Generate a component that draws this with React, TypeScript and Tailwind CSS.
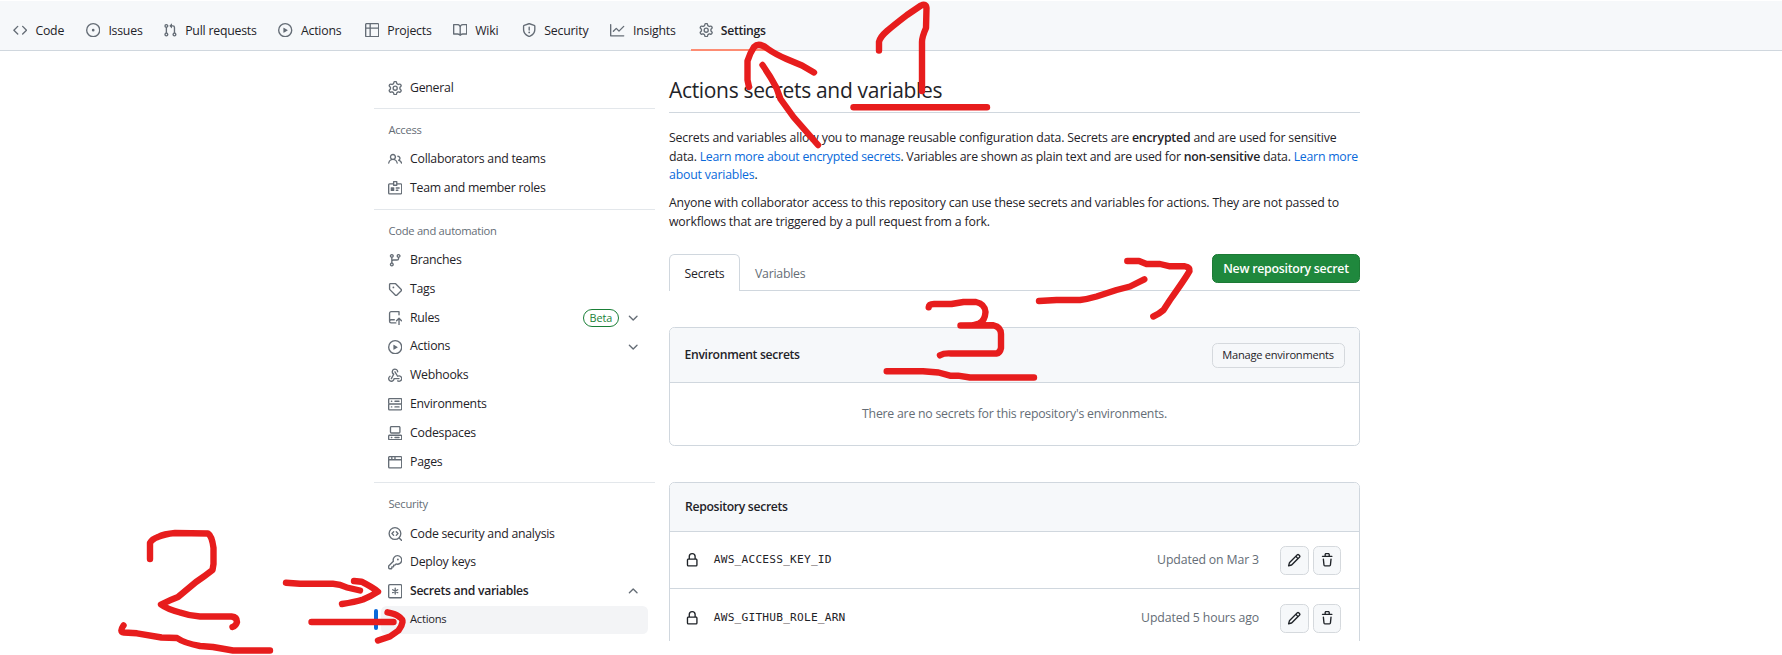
import React from "react";

type IconProps = { className?: string; d?: string; children?: React.ReactNode };

function Icon({ className = "", d, children }: IconProps) {
  return (
    <svg viewBox="0 0 16 16" className={`h-[14.4px] w-[14.4px] shrink-0 ${className}`} fill="currentColor">
      {d ? <path d={d} /> : children}
    </svg>
  );
}

const P = {
  code: "m11.28 3.22 4.25 4.25a.75.75 0 0 1 0 1.06l-4.25 4.25a.749.749 0 0 1-1.275-.326.749.749 0 0 1 .215-.734L13.94 8l-3.72-3.72a.749.749 0 0 1 .326-1.275.749.749 0 0 1 .734.215Zm-6.56 0a.751.751 0 0 1 1.042.018.751.751 0 0 1 .018 1.042L2.06 8l3.72 3.72a.749.749 0 0 1-.326 1.275.749.749 0 0 1-.734-.215L.47 8.53a.75.75 0 0 1 0-1.06Z",
  issue: "M8 9.5a1.5 1.5 0 1 0 0-3 1.5 1.5 0 0 0 0 3ZM8 0a8 8 0 1 1 0 16A8 8 0 0 1 8 0ZM1.5 8a6.5 6.5 0 1 0 13 0 6.5 6.5 0 0 0-13 0Z",
  pull: "M1.5 3.25a2.25 2.25 0 1 1 3 2.122v5.256a2.251 2.251 0 1 1-1.5 0V5.372A2.25 2.25 0 0 1 1.5 3.25Zm5.677-.177L9.573.677A.25.25 0 0 1 10 .854V2.5h1A2.5 2.5 0 0 1 13.5 5v5.628a2.251 2.251 0 1 1-1.5 0V5a1 1 0 0 0-1-1h-1v1.646a.25.25 0 0 1-.427.177L7.177 3.427a.25.25 0 0 1 0-.354ZM3.75 2.5a.75.75 0 1 0 0 1.5.75.75 0 0 0 0-1.5Zm0 9.5a.75.75 0 1 0 0 1.5.75.75 0 0 0 0-1.5Zm8.25.75a.75.75 0 1 0 1.5 0 .75.75 0 0 0-1.5 0Z",
  play: "M8 0a8 8 0 1 1 0 16A8 8 0 0 1 8 0ZM1.5 8a6.5 6.5 0 1 0 13 0 6.5 6.5 0 0 0-13 0Zm4.879-2.773 4.264 2.559a.25.25 0 0 1 0 .428l-4.264 2.559A.25.25 0 0 1 6 10.559V5.442a.25.25 0 0 1 .379-.215Z",
  table: "M0 1.75C0 .784.784 0 1.75 0h12.5C15.216 0 16 .784 16 1.75v12.5A1.75 1.75 0 0 1 14.25 16H1.75A1.75 1.75 0 0 1 0 14.25ZM6.5 6.5v8h7.75a.25.25 0 0 0 .25-.25V6.5Zm8-1.5V1.75a.25.25 0 0 0-.25-.25H6.5V5Zm-13 1.5v7.75c0 .138.112.25.25.25H5v-8ZM5 5V1.5H1.75a.25.25 0 0 0-.25.25V5Z",
  book: "M0 1.75A.75.75 0 0 1 .75 1h4.253c1.227 0 2.317.59 3 1.501A3.743 3.743 0 0 1 11.006 1h4.245a.75.75 0 0 1 .75.75v10.5a.75.75 0 0 1-.75.75h-4.507a2.25 2.25 0 0 0-1.591.659l-.622.621a.75.75 0 0 1-1.06 0l-.622-.621A2.25 2.25 0 0 0 5.258 13H.75a.75.75 0 0 1-.75-.75Zm7.251 10.324.004-5.073-.002-2.253A2.25 2.25 0 0 0 5.003 2.5H1.5v9h3.757a3.75 3.75 0 0 1 1.994.574ZM8.755 4.75l-.004 7.322a3.752 3.752 0 0 1 1.992-.572H14.5v-9h-3.495a2.25 2.25 0 0 0-2.25 2.25Z",
  shield: "M7.467.133a1.748 1.748 0 0 1 1.066 0l5.25 1.68A1.75 1.75 0 0 1 15 3.48V7c0 1.566-.32 3.182-1.303 4.682-.983 1.498-2.585 2.813-5.032 3.855a1.697 1.697 0 0 1-1.33 0c-2.447-1.042-4.049-2.357-5.032-3.855C1.32 10.182 1 8.566 1 7V3.48a1.75 1.75 0 0 1 1.217-1.667Zm.61 1.429a.25.25 0 0 0-.153 0l-5.25 1.68a.25.25 0 0 0-.174.238V7c0 1.358.275 2.666 1.057 3.86.784 1.194 2.121 2.34 4.366 3.297a.196.196 0 0 0 .154 0c2.245-.956 3.582-2.104 4.366-3.298C13.225 9.666 13.5 8.36 13.5 7V3.48a.251.251 0 0 0-.174-.237l-5.25-1.68ZM8.75 4.75v3a.75.75 0 0 1-1.5 0v-3a.75.75 0 0 1 1.5 0ZM9 10.5a1 1 0 1 1-2 0 1 1 0 0 1 2 0Z",
  graph: "M1.5 1.75V13.5h13.75a.75.75 0 0 1 0 1.5H.75a.75.75 0 0 1-.75-.75V1.75a.75.75 0 0 1 1.5 0Zm14.28 2.53-5.25 5.25a.75.75 0 0 1-1.06 0L7 7.06 4.28 9.78a.751.751 0 0 1-1.042-.018.751.751 0 0 1-.018-1.042l3.25-3.25a.75.75 0 0 1 1.06 0L10 7.94l4.72-4.72a.751.751 0 0 1 1.042.018.751.751 0 0 1 .018 1.042Z",
  gear: "M8 0a8.2 8.2 0 0 1 .701.031C9.444.095 9.99.645 10.16 1.29l.288 1.107c.018.066.079.158.212.224.231.114.454.243.668.386.123.082.233.09.299.071l1.103-.303c.644-.176 1.392.021 1.82.63.27.385.506.792.704 1.218.315.675.111 1.422-.364 1.891l-.814.806c-.049.048-.098.147-.088.294.016.257.016.515 0 .772-.01.147.038.246.088.294l.814.806c.475.469.679 1.216.364 1.891a7.977 7.977 0 0 1-.704 1.217c-.428.61-1.176.807-1.82.63l-1.102-.302c-.067-.019-.177-.011-.3.071a5.909 5.909 0 0 1-.668.386c-.133.066-.194.158-.211.224l-.29 1.106c-.168.646-.715 1.196-1.458 1.26a8.006 8.006 0 0 1-1.402 0c-.743-.064-1.289-.614-1.458-1.26l-.289-1.106c-.018-.066-.079-.158-.212-.224a5.738 5.738 0 0 1-.668-.386c-.123-.082-.233-.09-.299-.071l-1.103.303c-.644.176-1.392-.021-1.82-.63a8.12 8.12 0 0 1-.704-1.218c-.315-.675-.111-1.422.363-1.891l.815-.806c.05-.048.098-.147.088-.294a6.214 6.214 0 0 1 0-.772c.01-.147-.038-.246-.088-.294l-.815-.806C.635 6.045.431 5.298.746 4.623a7.92 7.92 0 0 1 .704-1.217c.428-.61 1.176-.807 1.82-.63l1.102.302c.067.019.177.011.3-.071.214-.143.437-.272.668-.386.133-.066.194-.158.211-.224l.29-1.106C6.009.645 6.556.095 7.299.03 7.53.01 7.764 0 8 0Zm-.571 1.525c-.036.003-.108.036-.137.146l-.289 1.105c-.147.561-.549.967-.998 1.189-.173.086-.34.183-.5.29-.417.278-.97.423-1.529.27l-1.103-.303c-.109-.03-.175.016-.195.045-.22.312-.412.644-.573.99-.014.031-.021.11.059.19l.815.806c.411.406.562.957.53 1.456a4.709 4.709 0 0 0 0 .582c.032.499-.119 1.05-.53 1.456l-.815.806c-.081.08-.073.159-.059.19.162.346.353.677.573.989.02.03.085.076.195.046l1.102-.303c.56-.153 1.113-.008 1.53.27.161.107.328.204.501.29.447.222.85.629.997 1.189l.289 1.105c.029.109.101.143.137.146a6.6 6.6 0 0 0 1.142 0c.036-.003.108-.036.137-.146l.289-1.105c.147-.561.549-.967.998-1.189.173-.086.34-.183.5-.29.417-.278.97-.423 1.529-.27l1.103.303c.109.029.175-.016.195-.045.22-.313.411-.644.573-.99.014-.031.021-.11-.059-.19l-.815-.806c-.411-.406-.562-.957-.53-1.456a4.709 4.709 0 0 0 0-.582c-.032-.499.119-1.05.53-1.456l.815-.806c.081-.08.073-.159.059-.19a6.464 6.464 0 0 0-.573-.989c-.02-.03-.085-.076-.195-.046l-1.102.303c-.56.153-1.113.008-1.53-.27a4.44 4.44 0 0 0-.501-.29c-.447-.222-.85-.629-.997-1.189l-.289-1.105c-.029-.11-.101-.143-.137-.146a6.6 6.6 0 0 0-1.142 0ZM11 8a3 3 0 1 1-6 0 3 3 0 0 1 6 0ZM9.5 8a1.5 1.5 0 1 0-3.001.001A1.5 1.5 0 0 0 9.5 8Z",
  people: "M2 5.5a3.5 3.5 0 1 1 5.898 2.549 5.508 5.508 0 0 1 3.034 4.084.75.75 0 1 1-1.482.235 4 4 0 0 0-7.9 0 .75.75 0 0 1-1.482-.236A5.507 5.507 0 0 1 3.102 8.05 3.493 3.493 0 0 1 2 5.5ZM11 4a3.001 3.001 0 0 1 2.22 5.018 5.01 5.01 0 0 1 2.56 3.012.749.749 0 0 1-.885.954.752.752 0 0 1-.549-.514 3.507 3.507 0 0 0-2.522-2.372.75.75 0 0 1-.574-.73v-.352a.75.75 0 0 1 .416-.672A1.5 1.5 0 0 0 11 5.5.75.75 0 0 1 11 4Zm-5.5-.5a2 2 0 1 0-.001 3.999A2 2 0 0 0 5.5 3.5Z",
  branch: "M9.5 3.25a2.25 2.25 0 1 1 3 2.122V6A2.5 2.5 0 0 1 10 8.5H6a1 1 0 0 0-1 1v1.128a2.251 2.251 0 1 1-1.5 0V5.372a2.25 2.25 0 1 1 1.5 0v1.836A2.493 2.493 0 0 1 6 7h4a1 1 0 0 0 1-1v-.628A2.25 2.25 0 0 1 9.5 3.25Zm-6 0a.75.75 0 1 0 1.5 0 .75.75 0 0 0-1.5 0Zm8.25-.75a.75.75 0 1 0 0 1.5.75.75 0 0 0 0-1.5ZM4.25 12a.75.75 0 1 0 0 1.5.75.75 0 0 0 0-1.5Z",
  tag: "M1 7.775V2.75C1 1.784 1.784 1 2.75 1h5.025c.464 0 .91.184 1.238.513l6.25 6.25a1.75 1.75 0 0 1 0 2.474l-5.026 5.026a1.75 1.75 0 0 1-2.474 0l-6.25-6.25A1.752 1.752 0 0 1 1 7.775Zm1.5 0c0 .066.026.13.073.177l6.25 6.25a.25.25 0 0 0 .354 0l5.025-5.025a.25.25 0 0 0 0-.354l-6.25-6.25a.25.25 0 0 0-.177-.073H2.75a.25.25 0 0 0-.25.25ZM6 5a1 1 0 1 1 0 2 1 1 0 0 1 0-2Z",
  webhook: "M5.5 4.25a2.25 2.25 0 0 1 4.5 0 .75.75 0 0 0 1.5 0 3.75 3.75 0 1 0-6.14 2.889l-2.272 4.258a.75.75 0 0 0 1.324.706L7 7.25a.75.75 0 0 0-.309-1.015A2.25 2.25 0 0 1 5.5 4.25ZM7.364 3.607a.75.75 0 0 1 1.03.257l2.608 4.349a3.75 3.75 0 1 1-.628 6.785.75.75 0 0 1 .752-1.299 2.25 2.25 0 1 0-.033-3.88.75.75 0 0 1-1.03-.256L7.107 4.636a.75.75 0 0 1 .257-1.03ZM2.9 8.776A.75.75 0 0 1 2.625 9.8 2.25 2.25 0 1 0 6 11.75a.75.75 0 0 1 .75-.751h5.5a.75.75 0 0 1 0 1.5H7.425a3.751 3.751 0 1 1-5.55-3.998.75.75 0 0 1 1.024.274Z",
  codespaces: "M0 11.25c0-.966.784-1.75 1.75-1.75h12.5c.966 0 1.75.784 1.75 1.75v3A1.75 1.75 0 0 1 14.25 16H1.75A1.75 1.75 0 0 1 0 14.25Zm2-9.5C2 .784 2.784 0 3.75 0h8.5C13.216 0 14 .784 14 1.75v5a1.75 1.75 0 0 1-1.75 1.75h-8.5A1.75 1.75 0 0 1 2 6.75Zm1.75-.25a.25.25 0 0 0-.25.25v5c0 .138.112.25.25.25h8.5a.25.25 0 0 0 .25-.25v-5a.25.25 0 0 0-.25-.25Zm-2 9.5a.25.25 0 0 0-.25.25v3c0 .138.112.25.25.25h12.5a.25.25 0 0 0 .25-.25v-3a.25.25 0 0 0-.25-.25ZM7 12.75a.75.75 0 0 1 .75-.75h4.5a.75.75 0 0 1 0 1.5h-4.5a.75.75 0 0 1-.75-.75Zm-4 0a.75.75 0 0 1 .75-.75h.5a.75.75 0 0 1 0 1.5h-.5a.75.75 0 0 1-.75-.75Z",
  browser: "M0 2.75C0 1.784.784 1 1.75 1h12.5c.966 0 1.75.784 1.75 1.75v10.5A1.75 1.75 0 0 1 14.25 15H1.75A1.75 1.75 0 0 1 0 13.25ZM14.5 6h-13v7.25c0 .138.112.25.25.25h12.5a.25.25 0 0 0 .25-.25Zm-6-3.5v2h6V2.75a.25.25 0 0 0-.25-.25ZM5 2.5v2h2v-2Zm-3.25 0a.25.25 0 0 0-.25.25V4.5h2v-2Z",
  key: "M10.5 0a5.499 5.499 0 1 1-1.288 10.848l-.932.932a.749.749 0 0 1-.53.22H7v.75a.749.749 0 0 1-.22.53l-.5.5a.749.749 0 0 1-.53.22H5v.75a.749.749 0 0 1-.22.53l-.5.5a.749.749 0 0 1-.53.22h-2A1.75 1.75 0 0 1 0 14.25v-2c0-.199.079-.389.22-.53l4.932-4.932A5.5 5.5 0 0 1 10.5 0Zm-4 5.5c-.001.431.069.86.205 1.269a.75.75 0 0 1-.181.768L1.5 12.56v1.69c0 .138.112.25.25.25h1.69l.06-.06v-1.19a.75.75 0 0 1 .75-.75h1.19l.06-.06v-1.19a.75.75 0 0 1 .75-.75h1.19l1.023-1.025a.75.75 0 0 1 .768-.18A4 4 0 1 0 6.5 5.5ZM11 6a1 1 0 1 1 0-2 1 1 0 0 1 0 2Z",
  lock: "M4 4a4 4 0 0 1 8 0v2h.25c.966 0 1.75.784 1.75 1.75v5.5A1.75 1.75 0 0 1 12.25 15h-8.5A1.75 1.75 0 0 1 2 13.25v-5.5C2 6.784 2.784 6 3.75 6H4Zm8.25 3.5h-8.5a.25.25 0 0 0-.25.25v5.5c0 .138.112.25.25.25h8.5a.25.25 0 0 0 .25-.25v-5.5a.25.25 0 0 0-.25-.25ZM10.5 6V4a2.5 2.5 0 1 0-5 0v2Z",
  pencil: "M11.013 1.427a1.75 1.75 0 0 1 2.474 0l1.086 1.086a1.75 1.75 0 0 1 0 2.474l-8.61 8.61c-.21.21-.47.364-.756.445l-3.251.93a.75.75 0 0 1-.927-.928l.929-3.25c.081-.286.235-.547.445-.758l8.61-8.61Zm.176 4.823L9.75 4.81l-6.286 6.287a.253.253 0 0 0-.064.108l-.558 1.953 1.953-.558a.253.253 0 0 0 .108-.064Zm1.238-3.763a.25.25 0 0 0-.354 0L10.811 3.75l1.439 1.44 1.263-1.263a.25.25 0 0 0 0-.354Z",
  trash: "M11 1.75V3h2.25a.75.75 0 0 1 0 1.5H2.75a.75.75 0 0 1 0-1.5H5V1.75C5 .784 5.784 0 6.75 0h2.5C10.216 0 11 .784 11 1.75ZM4.496 6.675l.66 6.6a.25.25 0 0 0 .249.225h5.19a.25.25 0 0 0 .249-.225l.66-6.6a.75.75 0 0 1 1.492.149l-.66 6.6A1.748 1.748 0 0 1 10.595 15h-5.19a1.75 1.75 0 0 1-1.741-1.575l-.66-6.6a.75.75 0 1 1 1.492-.15ZM6.5 1.75V3h3V1.75a.25.25 0 0 0-.25-.25h-2.5a.25.25 0 0 0-.25.25Z",
};

const line = { fill: "none", stroke: "currentColor", strokeWidth: 1.5, strokeLinecap: "round", strokeLinejoin: "round" } as const;

const BadgeIcon = () => (
  <Icon>
    <path {...line} d="M5.5 3.25H1.75a1 1 0 0 0-1 1v9a1 1 0 0 0 1 1h12.5a1 1 0 0 0 1-1v-9a1 1 0 0 0-1-1H10.5M6.25.75h3.5v4h-3.5zM9.2 7.75h3.2M9.2 10.25h1.8" />
    <rect x="3" y="7" width="4" height="4.2" rx=".6" />
  </Icon>
);
const RepoPushIcon = () => (
  <Icon>
    <path {...line} d="M12.25 4.25V.75H3.5A1.75 1.75 0 0 0 1.75 2.5v9M7 9.75H3.5a1.75 1.75 0 0 0 0 3.5h5.25M12.25 15.25V8.2M9.5 10.8l2.75-2.75L15 10.8" />
  </Icon>
);
const ServerIcon = () => (
  <Icon>
    <path {...line} d="M1.75 1.75h12.5a1 1 0 0 1 1 1v4a1 1 0 0 1-1 1H1.75a1 1 0 0 1-1-1v-4a1 1 0 0 1 1-1ZM1.75 7.75h12.5a1 1 0 0 1 1 1v4.5a1 1 0 0 1-1 1H1.75a1 1 0 0 1-1-1v-4.5a1 1 0 0 1 1-1ZM3.8 4.75h.4M7.75 4.75h4.5M3.8 11h.4M7.75 11h4.5" />
  </Icon>
);
const CodescanIcon = () => (
  <Icon>
    <path {...line} d="M14.25 7.25a6.5 6.5 0 1 1-13 0 6.5 6.5 0 0 1 13 0ZM12.4 12.2l2.8 2.8M6.3 5.2 4.4 7.25l1.9 2.05M9.2 5.2l1.9 2.05-1.9 2.05" />
  </Icon>
);
const AsteriskIcon = () => (
  <Icon>
    <rect {...line} x=".75" y=".75" width="14.5" height="14.5" rx="1.2" />
    <path {...line} d="M8 4.75v6.5M5.2 6.4l5.6 3.2M10.8 6.4 5.2 9.6" />
  </Icon>
);
const Chevron = ({ up = false }: { up?: boolean }) => (
  <Icon>
    <path {...line} d={up ? "M3.75 9.75 8 5.5l4.25 4.25" : "M3.75 5.75 8 10l4.25-4.25"} />
  </Icon>
);

const tabs = [
  { d: P.code, label: "Code", w: "w-[73px]" },
  { d: P.issue, label: "Issues", w: "w-[76.8px]" },
  { d: P.pull, label: "Pull requests", w: "w-[115.8px]" },
  { d: P.play, label: "Actions", w: "w-[86.4px]" },
  { d: P.table, label: "Projects", w: "w-[87.8px]" },
  { d: P.book, label: "Wiki", w: "w-[69.2px]" },
  { d: P.shield, label: "Security", w: "w-[88.7px]" },
  { d: P.graph, label: "Insights", w: "w-[88.2px]" },
];

function NavItem({ icon, label, bold = false, children }: { icon: React.ReactNode; label: string; bold?: boolean; children?: React.ReactNode }) {
  return (
    <div className="flex h-[28.8px] items-center pr-[14.5px] pl-[14px]">
      <span className="flex text-[#656d76]">{icon}</span>
      <span className={bold ? "ml-[7.6px] text-[12.2px] font-semibold tracking-[-0.3px]" : "ml-[7.6px]"}>{label}</span>
      <span className="ml-auto flex items-center gap-[7px] text-[#656d76]">{children}</span>
    </div>
  );
}

function GroupTitle({ children }: { children: React.ReactNode }) {
  return (
    <div className="mt-[7.2px] flex h-[29.2px] items-center pl-[14.5px] text-[11.2px] tracking-[-0.28px] text-[#656d76]">
      {children}
    </div>
  );
}

const Divider = () => <div className="mt-[5.7px] h-px bg-[#e3e7eb]" />;

function SecretRow({ name, updated, first = false }: { name: string; updated: string; first?: boolean }) {
  return (
    <div className={`flex items-center pr-[18px] pl-[15px] ${first ? "h-[56px]" : "h-[60px] border-t border-[#d0d7de]"}`}>
      <Icon d={P.lock} />
      <span className="ml-[14.4px] font-['DejaVu_Sans_Mono',monospace] text-[11.2px] tracking-[0.2px]">{name}</span>
      <span className="ml-auto tracking-[-0.14px] text-[#656d76]">{updated}</span>
      <button className="ml-[21px] flex h-[29px] w-[29px] items-center justify-center rounded-[5.4px] border border-[#d5d9dd] bg-[#f6f8fa]">
        <Icon d={P.pencil} />
      </button>
      <button className="ml-1 flex h-[29px] w-[28px] items-center justify-center rounded-[5.4px] border border-[#d5d9dd] bg-[#f6f8fa]">
        <Icon d={P.trash} />
      </button>
    </div>
  );
}

function Annotations() {
  return (
    <svg className="pointer-events-none absolute inset-0" width="1782" height="655" viewBox="0 0 1782 655" fill="none" stroke="#e71d1d" strokeWidth="6.4" strokeLinecap="round" strokeLinejoin="round">
      <path d="M879 50.5V42Q880 37 887 31T907 15L921 5.5Q926 3 926.5 8L926 28Q922 37 922 42V91" />
      <path d="M853.5 107.3H987" />
      <path d="M749 87 747.5 80V61Q750 53 754 47 759 42 768 49 775 54 786.5 59L802 65.5 814 72.5" />
      <path d="M762.5 65Q771 77 776.5 88L780.5 99 793.5 117 818 145" />
      <path d="M150 559V543Q152 539 158 537 164 534 175 533L208 533.5Q212 536 213.5 548V564L212.5 570Q205 576 196 582L178 597Q170 600 161 604.5 167 609 180 612.5 190 616 200 616.5H231.5Q237 617 237 622 236 626 232.5 627" />
      <path d="M123.5 625.5Q119 632 124 632.5L137 633.3 161.5 637.5 177 638Q184 643 200 646L213 647 233 650.5H270" />
      <path d="M286 582.7 300 583.7H333Q340 584 347 587.5L360 590.5" />
      <path d="M354 581 361.5 581.7Q372 587 378 591.7 370 597 363 599.5 355 602 342 604" />
      <path d="M311.5 622H393.5" />
      <path d="M387.5 612.3Q396 614 398 616 403 619 402.5 622 402 626 398.5 630.5L390 636.5 378 640.5" />
      <path d="M928.7 307.3Q929 304 934 304H951.5L963.5 302H976Q985 304 985.5 312 985 321 979 323.5L972 325.5H960.5L993.5 325.3Q1001 327 1001 334V348Q1000 353 996.5 353.5H951Q944 353 940 355.3" />
      <path d="M886.7 371.3H923L938.5 372.5 950 375.7H958L970 377.5H1034" />
      <path d="M1039 301 1056.5 300H1080Q1088 299 1096.5 296.5L1116.5 290 1130 286.5 1144.3 279.3" />
      <path d="M1127.3 261H1139L1146.5 264H1160L1170 266.3H1185Q1190 267 1189.5 271 1187 276 1170 300L1163.5 310Q1159 314 1153.3 316.5" />
    </svg>
  );
}

export default function App() {
  return (
    <div className="relative h-[655px] w-[1782px] overflow-hidden bg-white font-['Open_Sans',sans-serif] text-[12.3px] tracking-[-0.25px] text-[#1f2328]">
      <div className="h-[641px] overflow-hidden">
        <nav className="mt-px flex h-[50px] items-center border-b border-[#d0d7de] bg-[#f6f8fa] pt-[9px] pl-[12.8px]">
          {tabs.map((t) => (
            <div key={t.label} className={`flex shrink-0 items-center ${t.w}`}>
              <Icon d={t.d} className="text-[#656d76]" />
              <span className="ml-[8.2px] pt-[2px] tracking-[-0.22px] whitespace-nowrap">{t.label}</span>
            </div>
          ))}
          <div className="relative flex items-center">
            <Icon d={P.gear} className="text-[#656d76]" />
            <span className="ml-[7.8px] pt-[2px] text-[12.2px] font-semibold tracking-[-0.3px]">Settings</span>
            <span className="absolute top-[29px] left-[-7.6px] h-[2px] w-[83px] bg-[#fd8c73]" />
          </div>
        </nav>

        <div className="flex pl-[374px]">
          <aside className="w-[281px] pt-[22.4px]">
            <NavItem icon={<Icon d={P.gear} />} label="General" />
            <Divider />
            <GroupTitle>Access</GroupTitle>
            <NavItem icon={<Icon d={P.people} />} label="Collaborators and teams" />
            <NavItem icon={<BadgeIcon />} label="Team and member roles" />
            <Divider />
            <GroupTitle>Code and automation</GroupTitle>
            <NavItem icon={<Icon d={P.branch} />} label="Branches" />
            <NavItem icon={<Icon d={P.tag} />} label="Tags" />
            <NavItem icon={<RepoPushIcon />} label="Rules">
              <span className="flex h-[18px] items-center rounded-full border border-[#1a7f37] px-[6px] text-[10.8px] tracking-[-0.1px] text-[#1a7f37]">Beta</span>
              <Chevron />
            </NavItem>
            <NavItem icon={<Icon d={P.play} />} label="Actions">
              <Chevron />
            </NavItem>
            <NavItem icon={<Icon d={P.webhook} />} label="Webhooks" />
            <NavItem icon={<ServerIcon />} label="Environments" />
            <NavItem icon={<Icon d={P.codespaces} />} label="Codespaces" />
            <NavItem icon={<Icon d={P.browser} />} label="Pages" />
            <Divider />
            <GroupTitle>Security</GroupTitle>
            <NavItem icon={<CodescanIcon />} label="Code security and analysis" />
            <NavItem icon={<Icon d={P.key} />} label="Deploy keys" />
            <NavItem icon={<AsteriskIcon />} label="Secrets and variables" bold>
              <Chevron up />
            </NavItem>
            <div className="flex h-[28.5px] items-center">
              <span className="h-[21px] w-[4px] rounded-full bg-[#0969da]" />
              <div className="ml-[3px] flex h-full w-[267px] items-center rounded-[5.4px] bg-[#f3f4f6] pb-[1px] pl-[29px] text-[11.2px]">Actions</div>
            </div>
          </aside>

          <main className="ml-[14px] w-[691px] pt-[20px]">
            <h1 className="h-[42px] border-b border-[#d0d7de] text-[21px] leading-[38px] tracking-[-0.33px]">Actions secrets and variables</h1>
            <div className="mt-[16px] h-[103px] text-[12.3px] leading-[18.6px] tracking-[-0.18px] whitespace-nowrap">
              <p>Secrets and variables allow you to manage reusable configuration data. Secrets are <b className="font-semibold">encrypted</b> and are used for sensitive</p>
              <p className="tracking-[-0.23px]">data. <a className="text-[#0969da]">Learn more about encrypted secrets</a>. Variables are shown as plain text and are used for <b className="font-semibold">non-sensitive</b> data. <a className="text-[#0969da]">Learn more</a></p>
              <p><a className="text-[#0969da]">about variables</a>.</p>
              <p className="mt-[9.2px]">Anyone with collaborator access to this repository can use these secrets and variables for actions. They are not passed to</p>
              <p>workflows that are triggered by a pull request from a fork.</p>
            </div>

            <div className="mt-[22px] flex h-[37px] items-start border-b border-[#d0d7de]">
              <div className="flex h-[37px] w-[71px] items-center justify-center rounded-t-[5.4px] border border-b-0 border-[#d0d7de] bg-white pt-[3px]">Secrets</div>
              <div className="flex h-[37px] items-center pt-[3px] pl-[15px] text-[#656d76]">Variables</div>
              <button className="ml-auto flex h-[29px] w-[148px] items-center justify-center rounded-[5.4px] border border-[#1c7a35] bg-[#1f883d] pt-[2px] font-semibold whitespace-nowrap text-white">New repository secret</button>
            </div>

            <section className="mt-[36px] h-[119px] rounded-[5.4px] border border-[#d0d7de]">
              <div className="flex h-[55px] items-center justify-between rounded-t-[4.4px] border-b border-[#d0d7de] bg-[#f6f8fa] px-[14.5px]">
                <span className="pt-px text-[12.2px] font-semibold tracking-[-0.32px]">Environment secrets</span>
                <button className="flex h-[25px] w-[133px] items-center justify-center rounded-[5.4px] border border-[#d5d9dd] pt-px text-[11.1px] whitespace-nowrap">Manage environments</button>
              </div>
              <div className="flex h-[62px] items-center justify-center pt-px tracking-[-0.23px] text-[#656d76]">There are no secrets for this repository's environments.</div>
            </section>

            <section className="mt-[36px] h-[200px] rounded-[5.4px] border border-[#d0d7de]">
              <div className="flex h-[49px] items-center rounded-t-[4.4px] border-b border-[#d0d7de] bg-[#f6f8fa] px-[15px] pt-px text-[12.2px] font-semibold tracking-[-0.32px]">Repository secrets</div>
              <SecretRow name="AWS_ACCESS_KEY_ID" updated="Updated on Mar 3" first />
              <SecretRow name="AWS_GITHUB_ROLE_ARN" updated="Updated 5 hours ago" />
            </section>
          </main>
        </div>
      </div>
      <Annotations />
    </div>
  );
}
